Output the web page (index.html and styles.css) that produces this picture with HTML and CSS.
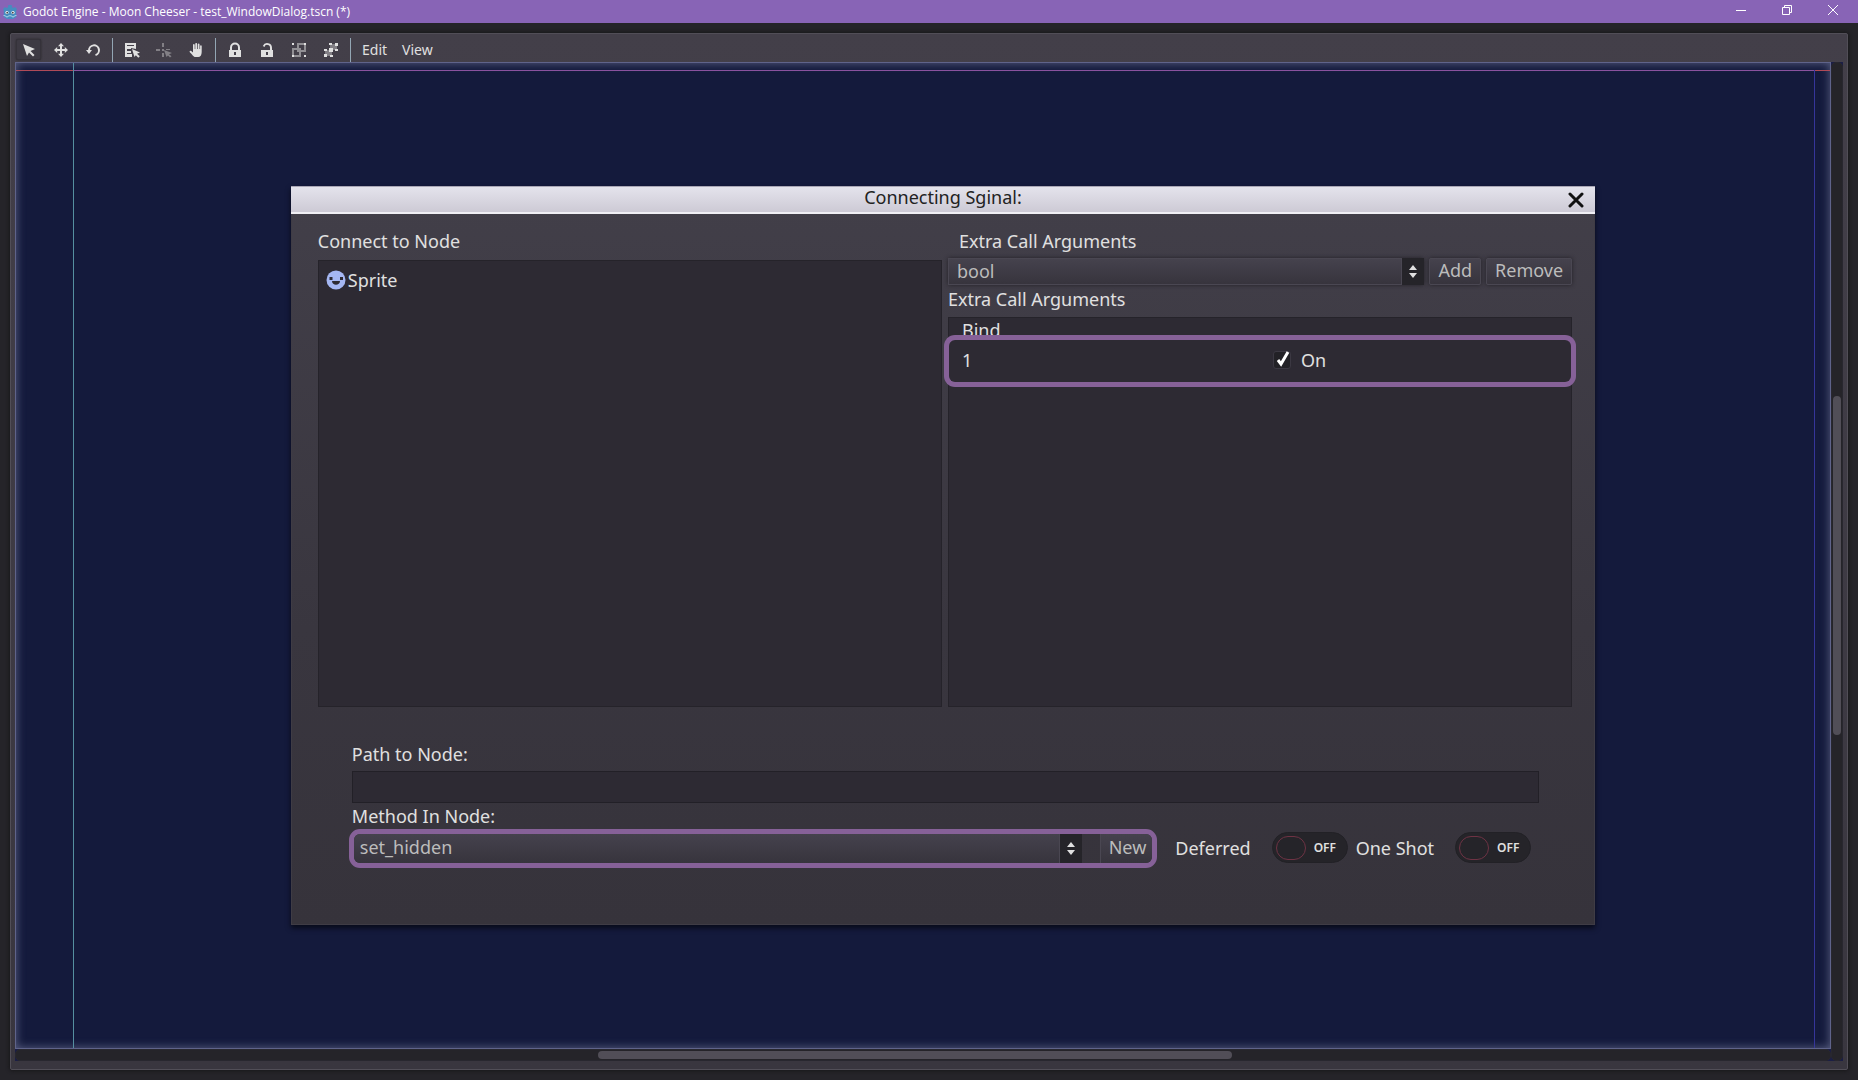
FILE: index.html
```html
<!DOCTYPE html>
<html lang="en">
<head>
    <meta charset="UTF-8">
    <meta name="viewport" content="width=device-width, initial-scale=1.0">
    <title>Godot Engine - Moon Cheeser - test_WindowDialog.tscn (*)</title>
    <link rel="stylesheet" href="styles.css">
</head>
<body>
    <header class="titlebar">
        <svg class="app-icon" width="16" height="16" viewBox="0 0 16 16">
            <path fill="#478cbf" d="M1 5l2-2 1.500 1 1.500-.7L6.300 1h3.400l.3 2.300 1.500.7L13 3l2 2-.8 1.600V13L11 15H5l-3.200-2V6.600z"/>
            <circle cx="5" cy="8.500" r="1.600" fill="#fff"/>
            <circle cx="11" cy="8.500" r="1.600" fill="#fff"/>
            <circle cx="5.200" cy="8.700" r=".9" fill="#414042"/>
            <circle cx="10.800" cy="8.700" r=".9" fill="#414042"/>
            <path fill="none" stroke="#a8d4ec" d="M1.500 11.500l2 .3.500 1h2l.5-1h3l.5 1h2l.5-1 2-.3"/>
        </svg>
        <h1>Godot Engine - Moon Cheeser - test_WindowDialog.tscn (*)</h1>
        <div class="window-controls">
            <button type="button" aria-label="Minimize">
                <svg width="12" height="12" viewBox="0 0 12 12"><path d="M1 6.500h10"/></svg>
            </button>
            <button type="button" aria-label="Restore">
                <svg width="12" height="12" viewBox="0 0 12 12"><path d="M1.500 3.500h7v7h-7zM3.500 3V1.500h7v7H9"/></svg>
            </button>
            <button type="button" aria-label="Close">
                <svg width="12" height="12" viewBox="0 0 12 12"><path d="M1 1l10 10M11 1L1 11"/></svg>
            </button>
        </div>
    </header>

    <main class="panel">
        <nav class="toolbar">
            <button type="button" class="tool active" aria-label="Select">
                <svg width="16" height="16" viewBox="0 0 16 16"><path d="M2 2l12 5-4.500 2 4 4-1.500 1.500-4-4L6 14z"/></svg>
            </button>
            <button type="button" class="tool" aria-label="Move">
                <svg width="16" height="16" viewBox="0 0 16 16"><path d="M8 1l3 3.200H9V7h2.800V5L15 8l-3.200 3V9H9v2.800h2L8 15l-3-3.200h2V9H4.200v2L1 8l3.200-3v2H7V4.200H5z"/></svg>
            </button>
            <button type="button" class="tool" aria-label="Rotate">
                <svg width="16" height="16" viewBox="0 0 16 16"><path d="M1 8h6l-3 4z"/><path class="line" d="M4 8.500a5 5 0 1 1 6.500 4.600"/></svg>
            </button>
            <span class="separator"></span>
            <button type="button" class="tool" aria-label="List select">
                <svg width="16" height="16" viewBox="0 0 16 16"><path fill-rule="evenodd" d="M1 1h11v6L7 6v1H3v2h4v2H3v1h5v3H1zm2 2v1h7V3z"/><path d="M8 7l8 3.500-3 1.200 2.800 2.500-1.500 1.500-2.500-2.500L10.500 15z"/></svg>
            </button>
            <button type="button" class="tool faded" aria-label="Edit pivot">
                <svg width="16" height="16" viewBox="0 0 16 16"><path d="M6 1h2v4H6zM0 7h4v2H0zM6 7h2v2H6zM10 7h4v1h-4zM6 11h2v4H6z"/><path d="M8 8l8 3-3 1.300 2.500 2L14 15.500l-2-2L10.500 15z"/></svg>
            </button>
            <button type="button" class="tool" aria-label="Pan">
                <svg width="16" height="16" viewBox="0 0 16 16"><path d="M5 8V3c0-1.200 1.700-1.200 1.700 0v4h.6V2c0-1.300 1.800-1.300 1.800 0v5h.7V2.500c0-1.200 1.700-1.200 1.700 0V7h.6V4c0-1.100 1.600-1.100 1.600 0v6c0 3-1.300 5-3.500 5H7.500C5 15 4.500 12.500 2 10.500 1 9.500 2 8.300 3.200 9L5 10.500z"/></svg>
            </button>
            <span class="separator"></span>
            <button type="button" class="tool" aria-label="Lock">
                <svg width="16" height="16" viewBox="0 0 16 16"><path fill-rule="evenodd" d="M2 8h1V5.500a5 5 0 0 1 10 0V8h1v7H2zm3 0h6V5.500a3 3 0 0 0-6 0zm2 2v3h2v-3z"/></svg>
            </button>
            <button type="button" class="tool" aria-label="Unlock">
                <svg width="16" height="16" viewBox="0 0 16 16"><path fill-rule="evenodd" d="M2 8h9V6a2.800 2.800 0 0 0-5.500-1L3.800 4A4.800 4.800 0 0 1 13 6v2h1v7H2zm5 2v3h2v-3z"/></svg>
            </button>
            <button type="button" class="tool" aria-label="Group">
                <svg width="16" height="16" viewBox="0 0 16 16"><path opacity=".5" fill-rule="evenodd" d="M6 1h9v9h-5v5H1V6h5zm2 2v3h2v2h3V3zM3 8v5h5v-3H6V8z"/><path d="M1 1h2v2H1zM13 1h2v2h-2zM1 13h2v2H1zM13 13h2v2h-2z"/></svg>
            </button>
            <button type="button" class="tool" aria-label="Ungroup">
                <svg width="16" height="16" viewBox="0 0 16 16"><path opacity=".4" d="M7 2h7v6H9v6H2V8h5z"/><path d="M6 1h3v2H6zM12 1h3v3h-3zM6 6h4v4H6zM12 7h3v2h-3zM1 7h3v2H1zM1 12h3v3H1zM7 13h3v2H7z"/></svg>
            </button>
            <span class="separator"></span>
            <button type="button" class="menu">Edit</button>
            <button type="button" class="menu">View</button>
        </nav>

        <div class="workspace">
            <section class="viewport">
                <div class="guide guide-x"></div>
                <div class="guide guide-y"></div>
                <div class="guide guide-edge"></div>

                <form class="dialog">
                    <div class="dialog-title">
                        <h2>Connecting Sginal:</h2>
                        <button type="button" aria-label="Close dialog">
                            <svg width="16" height="16" viewBox="0 0 16 16"><path d="M2 2l12 12M14 2L2 14"/></svg>
                        </button>
                    </div>

                    <div class="columns">
                        <div class="column">
                            <h3>Connect to Node</h3>
                            <ul class="tree">
                                <li>
                                    <svg width="20" height="20" viewBox="0 0 20 20">
                                        <circle cx="10" cy="10" r="9.500" fill="#a5b7f3"/>
                                        <path fill="#2d2a33" d="M3.500 7h3v3h-3zM14 7h3v3h-3zM6 11h8c0 5-8 5-8 0z"/>
                                    </svg>
                                    Sprite
                                </li>
                            </ul>
                        </div>

                        <div class="column">
                            <h3><label class="indent" for="argType">Extra Call Arguments</label></h3>
                            <div class="arg-row">
                                <div class="option">
                                    <select id="argType"><option>bool</option></select>
                                    <svg width="22" height="27" viewBox="0 0 22 27"><path d="M11 7l4 5H7zM11 20l4-5H7z"/></svg>
                                </div>
                                <button type="button" class="btn">Add</button>
                                <button type="button" class="btn">Remove</button>
                            </div>
                            <h3>Extra Call Arguments</h3>
                            <div class="tree">
                                <table class="binds">
                                    <thead>
                                        <tr><th colspan="2"><div>Bind</div></th></tr>
                                    </thead>
                                    <tbody>
                                        <tr>
                                            <td id="bind1">1</td>
                                            <td>
                                                <label class="check">
                                                    <input type="checkbox" checked aria-describedby="bind1">
                                                    <svg width="18" height="18" viewBox="0 0 18 18"><path d="M5 9l3 4 7-12"/></svg>
                                                    On
                                                </label>
                                            </td>
                                        </tr>
                                    </tbody>
                                </table>
                            </div>
                        </div>
                    </div>

                    <div class="target">
                        <label for="path">Path to Node:</label>
                        <input type="text" id="path">
                        <label for="method">Method In Node:</label>
                        <div class="method-row">
                            <div class="method">
                                <div class="option">
                                    <select id="method"><option>set_hidden</option></select>
                                    <svg width="22" height="29" viewBox="0 0 22 27"><path d="M11 7l4 5H7zM11 20l4-5H7z"/></svg>
                                </div>
                                <button type="button" class="btn">New</button>
                            </div>
                            <label class="switch">Deferred
                                <input type="checkbox">
                                <span class="track"><i></i>OFF</span>
                            </label>
                            <label class="switch">One Shot
                                <input type="checkbox">
                                <span class="track"><i></i>OFF</span>
                            </label>
                        </div>
                    </div>
                </form>
            </section>
            <div class="scroll scroll-v"><div class="thumb"></div></div>
            <div class="scroll scroll-h"><div class="thumb"></div></div>
        </div>
    </main>
</body>
</html>
```
FILE: styles.css
```css
* {
    box-sizing: border-box;
}

body {
    margin: 0;
    height: 100vh;
    display: flex;
    flex-direction: column;
    background: #252429;
    color: #e0e0e0;
    font-family: "Noto Sans", "Open Sans", sans-serif;
    font-size: 18px;
    overflow: hidden;
}

h1, h2, h3 {
    margin: 0;
    font-weight: normal;
}

button {
    padding: 0;
    border: none;
    background: none;
    color: inherit;
    font: inherit;
}

/* Window title bar */
.titlebar {
    flex: none;
    display: flex;
    align-items: center;
    height: 23px;
    padding: 0 2px;
    background: #8864b6;
    color: #fff;
}

.app-icon {
    margin-right: 5px;
}

.titlebar h1 {
    flex: 1;
    font-family: "Open Sans", sans-serif;
    font-size: 12px;
}

.window-controls button {
    float: left;
    display: flex;
    justify-content: center;
    width: 46px;
    height: 15px;
}

.window-controls path {
    fill: none;
    stroke: #fff;
}

/* Editor panel */
.panel {
    flex: 1;
    display: flex;
    flex-direction: column;
    min-height: 0;
    margin: 10px;
    padding: 0 4px 8px;
    border: 1px solid #514e57;
    border-radius: 2px;
    background: linear-gradient(#433f49, #39363f);
    box-shadow: 0 0 4px #111;
}

.toolbar {
    flex: none;
    display: flex;
    align-items: center;
    gap: 7px;
    height: 28px;
    padding: 4px 1px 1px;
}

.tool {
    display: flex;
    justify-content: center;
    align-items: center;
    width: 25px;
    height: 21px;
}

.tool path {
    fill: #e0e0e0;
}

.tool .line {
    fill: none;
    stroke: #e0e0e0;
    stroke-width: 2;
}

.tool.active {
    border: 1px solid #35323a;
    border-radius: 2px;
    background: #3d3a43;
    box-shadow: 0 0 2px #222;
}

.tool.faded {
    opacity: 0.4;
}

.separator {
    width: 1px;
    height: 24px;
    margin-right: -1px;
    background: #93a6b4;
}

.menu {
    margin: 0 3px 0 5px;
    font-size: 14px;
}

/* Canvas and scrollbars */
.workspace {
    flex: 1;
    display: grid;
    grid-template: 1fr 12px / 1fr 12px;
    min-height: 0;
    background: #1b1e45;
}

.viewport {
    position: relative;
    border: 1px solid #5f638a;
    background: #141a3c;
    box-shadow: inset 0 0 10px #5c6184;
}

.guide {
    position: absolute;
}

.guide-x {
    top: 7px;
    left: 0;
    right: 0;
    height: 1px;
    background: linear-gradient(90deg, #b04a58 58px, #8a529f 58px calc(100% - 16px), #b04a58 0);
}

.guide-y {
    top: 0;
    bottom: 0;
    left: 57px;
    width: 1px;
    background: #558fa0;
}

.guide-edge {
    top: 7px;
    bottom: 0;
    right: 15px;
    width: 1px;
    background: #35359a;
}

.scroll {
    display: flex;
    border: 1px solid #28272f;
    border-radius: 5px;
    background: #252429;
}

/* The vertical bar runs down past the corner */
.scroll-v {
    grid-row: 1 / 3;
    grid-column: 2;
    justify-content: center;
    padding-top: 333px;
}

.scroll-h {
    padding: 1px 0 1px 582px;
}

.thumb {
    border-radius: 4px;
    background: #514e57;
}

.scroll-v .thumb {
    width: 8px;
    height: 51%;
}

.scroll-h .thumb {
    width: 51.5%;
}

/* Connection dialog */
.dialog {
    position: absolute;
    top: 123px;
    left: 15.15%;
    width: 71.9%;
    background: linear-gradient(#423f49, #39363f 60%, #36333b);
    border: 1px solid #3f3c45;
    border-top: none;
    box-shadow: 0 3px 5px #080a18;
}

.dialog-title {
    display: flex;
    height: 28px;
    margin: 0 -1px;
    border-top: 1px solid #a9a6b5;
    border-bottom: 2px solid #f0eff4;
    background: linear-gradient(#e4e3ec, #cdcad5);
    color: #222;
}

.dialog-title h2 {
    flex: 1;
    padding-left: 38px;
    font-size: 18px;
    line-height: 21px;
    text-align: center;
}

.dialog-title button {
    width: 38px;
    padding-top: 2px;
    line-height: 1;
}

.dialog-title path {
    stroke: #111;
    stroke-width: 3;
    stroke-linecap: round;
}

.columns {
    display: flex;
    gap: 6px;
    padding: 13px 22px 0 26px;
}

.column {
    flex: 1;
    display: flex;
    flex-direction: column;
    height: 480px;
}

h3 {
    height: 30px;
    font-size: 18px;
    line-height: 28px;
}

.column > h3:first-child {
    height: 31px;
}

.indent {
    padding-left: 11px;
}

.tree {
    flex: 1;
    margin: 2px 0 0;
    padding: 0;
    border: 1px solid #25232a;
    background: #2d2a33;
    list-style: none;
}

.tree li {
    display: flex;
    align-items: center;
    gap: 2px;
    padding: 7px;
}

.arg-row {
    display: flex;
    gap: 5px;
    height: 27px;
}

.option {
    flex: 1;
    display: flex;
    border-radius: 2px;
    box-shadow: 0 0 4px #222027;
}

.option svg {
    flex: none;
    background: #252429;
}

.option path {
    fill: #e0e0e0;
}

select {
    appearance: none;
    flex: 1;
    min-width: 0;
    padding: 0 8px 4px;
    border: 1px solid #4a4752;
    background: linear-gradient(#45424d, #37343d);
    color: #bcbcbc;
    font: inherit;
}

.btn {
    padding: 0 8px 3px;
    border: 1px solid #4a4752;
    border-radius: 2px;
    background: linear-gradient(#45424d, #37343d);
    box-shadow: 0 0 4px #222027;
    color: #bcbcbc;
    line-height: 22px;
}

.binds {
    width: calc(100% + 10px);
    margin: 0 -5px;
    border-spacing: 0;
    table-layout: fixed;
}

.binds th {
    padding: 0 0 0 18px;
    font-weight: normal;
    text-align: left;
}

.binds th div {
    height: 17px;
    line-height: 24px;
    overflow: hidden;
}

.binds td {
    height: 52px;
    padding: 0 0 3px 13px;
    border: 5px solid #866198;
    background: #2d2a33;
}

.binds td:first-child {
    border-right: none;
    border-radius: 11px 0 0 11px;
}

.binds td:last-child {
    border-left: none;
    border-radius: 0 11px 11px 0;
}

.check {
    display: flex;
    align-items: center;
}

.check input {
    appearance: none;
    width: 18px;
    height: 18px;
    margin: 0;
    border: 1px solid #3b3842;
    border-radius: 3px;
    background: #222126;
}

.check svg {
    margin: 0 10px 0 -18px;
}

.check path {
    fill: none;
    stroke: #fff;
    stroke-width: 3;
}

.check input:not(:checked) + svg {
    visibility: hidden;
}

/* Target method */
.target {
    display: flex;
    flex-direction: column;
    padding: 34px 55px 56px 60px;
}

.target > label {
    line-height: 26px;
}

.target input[type="text"] {
    height: 32px;
    margin: 4px 0 0;
    border: 1px solid #222027;
    background: #2d2a33;
    color: inherit;
    font: inherit;
}

.method-row {
    display: flex;
    align-items: center;
}

.method {
    flex: 1;
    display: flex;
    gap: 18px;
    height: 39px;
    margin: 0 18px 0 -3px;
    border: 5px solid #866198;
    border-radius: 11px;
}

.method .option,
.method .btn {
    box-shadow: none;
}

.method select {
    padding: 0 6px 4px;
    border-width: 0 1px 0 0;
    border-radius: 6px 0 0 6px;
}

.method .btn {
    padding: 0 6px 3px 8px;
    border-width: 0 0 0 1px;
    border-radius: 0 6px 6px 0;
}

.switch {
    display: flex;
    align-items: center;
    position: relative;
    margin: 0 8px 2px 0;
}

.switch input {
    position: absolute;
    opacity: 0;
}

.track {
    display: flex;
    align-items: center;
    gap: 8px;
    width: 76px;
    height: 31px;
    margin-left: 21px;
    padding-left: 3px;
    border: 1px solid #222126;
    border-radius: 16px;
    background: #252429;
    font-size: 12px;
    font-weight: 600;
}

.track i {
    width: 30px;
    height: 24px;
    border: 1px solid #6e3344;
    border-radius: 12px;
}

.switch input:focus-visible + .track {
    outline: 1px solid #866198;
}
```
